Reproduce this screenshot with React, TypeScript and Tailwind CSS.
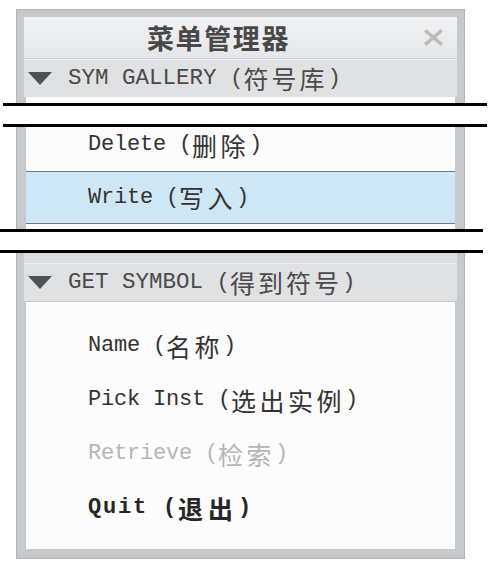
import React from "react";

const mono = "font-['Liberation_Mono','Noto_Sans_CJK_SC',monospace]";
const cjk = "font-['Noto_Sans_CJK_SC',sans-serif]";

function Triangle() {
  return (
    <svg width="24" height="13" viewBox="0 0 24 13" className="ml-[4px] mr-[16px] shrink-0">
      <polygon points="0,0 24,0 12,13" fill="#4f5153" />
    </svg>
  );
}

function Header({ en, zh }: { en: string; zh: string }) {
  return (
    <div className="flex h-[38px] items-center bg-[#dfe1e3] border-t border-[#eceef0] text-[#4a4a4a]">
      <Triangle />
      <span className={`${mono} text-[22.5px] leading-none whitespace-pre`}>{en} (</span>
      <span className={`${cjk} text-[25px] leading-none tracking-[3px]`}>{zh}</span>
      <span className={`${mono} text-[22.5px] leading-none`}>)</span>
    </div>
  );
}

function Item({ en, zh, tone = "normal" }: { en: string; zh: string; tone?: "normal" | "dim" | "bold" }) {
  const color = tone === "dim" ? "text-[#b6b6b6]" : tone === "bold" ? "text-[#262626] font-bold" : "text-[#333333]";
  const latinTrack = tone === "bold" ? "tracking-[1.8px]" : "tracking-[-0.2px]";
  const cjkTrack = tone === "bold" ? "tracking-[5px]" : "tracking-[3.5px]";
  return (
    <div className={`flex items-center pl-[62px] ${color}`}>
      <span className={`${mono} text-[22px] ${latinTrack} leading-none whitespace-pre`}>{en} (</span>
      <span className={`${cjk} text-[25px] ${cjkTrack} leading-none`}>{zh}</span>
      <span className={`${mono} text-[22px] leading-none`}>)</span>
    </div>
  );
}

function Break({ shift }: { shift: "a" | "b" }) {
  const cls = shift === "a" ? "ml-[3px] w-[484px]" : "ml-0 w-[483px]";
  return (
    <div className="flex flex-col bg-white">
      <div className={`h-[3px] bg-black ${cls}`} />
      <div className="h-[18px]" />
      <div className={`h-[3px] bg-black ${cls}`} />
    </div>
  );
}

export default function App() {
  return (
    <div className="w-[488px] h-[562px] bg-white pt-[9px] overflow-hidden">
      {/* Segment A */}
      <div className="ml-[16px] w-[449px] bg-[#c7cacd] border-x border-t border-[#b1b5b9] px-[7px] pt-[7px]">
        <div className="flex h-[42px] items-center bg-linear-to-b from-[#f1f2f3] to-[#e4e6e8] border-b border-[#cfd2d5]">
          <div className="flex-1 flex justify-center">
            <span className={`${cjk} text-[27px] font-bold tracking-[1.6px] leading-none text-[#484848]`}>菜单管理器</span>
          </div>
          <div className="w-[44px] pr-[4px] flex justify-center">
            <svg width="19" height="17" viewBox="0 0 19 17">
              <path d="M2.5 2.5 L16.5 14.5 M16.5 2.5 L2.5 14.5" stroke="#bcbcbc" strokeWidth="3.6" strokeLinecap="square" />
            </svg>
          </div>
        </div>
        <Header en="SYM GALLERY" zh="符号库" />
        <div className="mx-[2px] h-[6px] bg-[#fcfcfc]" />
      </div>

      <Break shift="a" />

      {/* Segment B */}
      <div className="ml-[16px] w-[449px] bg-[#c7cacd] border-x border-[#b1b5b9] px-[7px]">
        <div className="mx-[2px] bg-[#fcfcfc]">
          <div className="h-[44px] flex flex-col">
            <div className="h-[36px] flex items-center">
              <Item en="Delete" zh="删除" />
            </div>
          </div>
          <div className="h-[53px] flex items-center bg-[#cfe6f4] border-y border-[#6f7a84]">
            <Item en="Write" zh="写入" />
          </div>
          <div className="h-[5px]" />
        </div>
      </div>

      <Break shift="b" />

      {/* Segment C */}
      <div className="ml-[16px] w-[449px] bg-[#c7cacd] border-x border-b border-[#b1b5b9] px-[7px] pb-[9px]">
        <div className="h-[10px] bg-[#dcdfe2]" />
        <div className="h-[39px] flex flex-col">
          <Header en="GET SYMBOL" zh="得到符号" />
        </div>
        <div className="mx-[2px] bg-[#fcfcfc] pt-[17px] pb-[14px]">
          <div className="h-[54px] flex items-center">
            <Item en="Name" zh="名称" />
          </div>
          <div className="h-[54px] flex items-center">
            <Item en="Pick Inst" zh="选出实例" />
          </div>
          <div className="h-[54px] flex items-center">
            <Item en="Retrieve" zh="检索" tone="dim" />
          </div>
          <div className="h-[54px] flex items-center">
            <Item en="Quit" zh="退出" tone="bold" />
          </div>
        </div>
      </div>
    </div>
  );
}
